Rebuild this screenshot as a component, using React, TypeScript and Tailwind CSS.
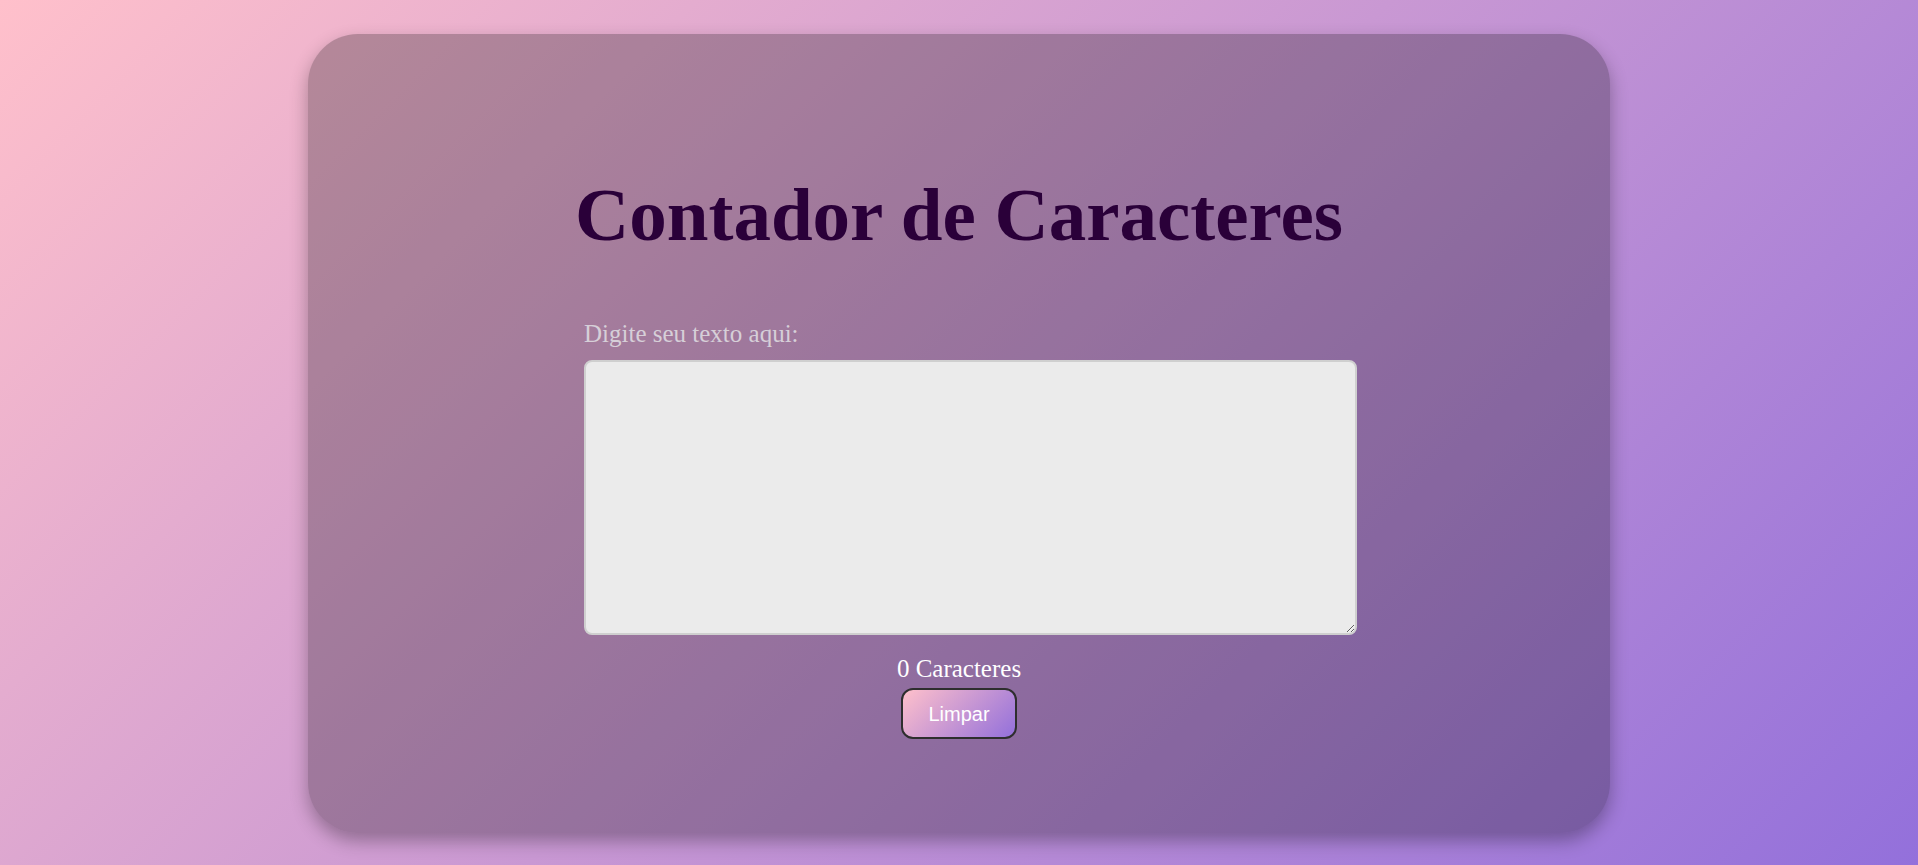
import { useState } from "react";

export default function App() {
  const [text, setText] = useState("");

  return (
    <div className="min-h-[865px] w-full overflow-hidden bg-[linear-gradient(135deg,#ffc0cb,#9370db)] pt-[34px] font-['Liberation_Serif',serif]">
      <div className="mx-auto flex h-[799px] w-[1302px] flex-col items-center rounded-[50px] bg-black/25 pt-[140px] shadow-[0_8px_18px_rgba(0,0,0,0.3)]">
        <h1 className="text-[75px] font-bold leading-[82px] text-[#2a0039]">
          Contador de Caracteres
        </h1>

        <div className="mt-[64px] w-[750px]">
          <label
            htmlFor="texto"
            className="block text-[25px] leading-[28px] text-[#d6cfd8]"
          >
            Digite seu texto aqui:
          </label>
          <textarea
            id="texto"
            value={text}
            onChange={(e) => setText(e.target.value)}
            className="mt-[12px] block h-[275px] w-[773px] rounded-lg border-2 border-[#cfcfcf] bg-[#ebebeb] p-2 text-[16px] outline-none"
          />
        </div>

        <p className="mt-[20px] text-[25px] leading-[28px] text-white">
          {text.length} Caracteres
        </p>

        <button
          type="button"
          onClick={() => setText("")}
          className="mt-[5px] h-[51px] w-[116px] rounded-xl border-2 border-[#2e2e2e] bg-[linear-gradient(135deg,#ffc0cb,#9370db)] font-['Liberation_Sans',sans-serif] text-[20px] text-white"
        >
          Limpar
        </button>
      </div>
    </div>
  );
}
